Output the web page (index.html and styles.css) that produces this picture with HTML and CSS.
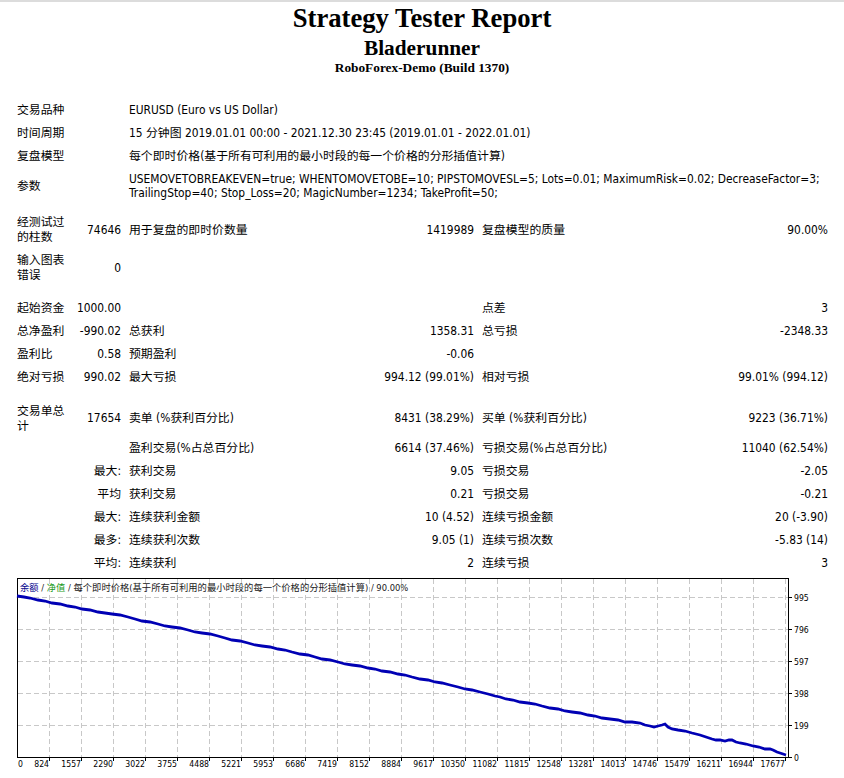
FILE: index.html
```html
<!DOCTYPE html>
<html lang="zh">
<head>
<meta charset="utf-8">
<title>Strategy Tester: Bladerunner</title>
<link rel="stylesheet" href="styles.css">
</head>
<body>
<div class="topline"></div>
<header class="head">
  <div class="t1">Strategy Tester Report</div>
  <div class="t2">Bladerunner</div>
  <div class="t3">RoboForex-Demo (Build 1370)</div>
</header>

<section class="report">
  <div class="row h23"><div class="s2">交易品种</div><div class="s4">EURUSD (Euro vs US Dollar)</div></div>
  <div class="row h23"><div class="s2">时间周期</div><div class="s4">15 分钟图 2019.01.01 00:00 - 2021.12.30 23:45 (2019.01.01 - 2022.01.01)</div></div>
  <div class="row h23"><div class="s2">复盘模型</div><div class="s4">每个即时价格(基于所有可利用的最小时段的每一个价格的分形插值计算)</div></div>
  <div class="row h36"><div class="s2">参数</div><div class="s4 params">USEMOVETOBREAKEVEN=true; WHENTOMOVETOBE=10; PIPSTOMOVESL=5; Lots=0.01; MaximumRisk=0.02; DecreaseFactor=3;<br>TrailingStop=40; Stop_Loss=20; MagicNumber=1234; TakeProfit=50;</div></div>
  <div class="sp7"></div>
  <div class="row h38"><div class="lbl">经测试过的柱数</div><div class="r">74646</div><div>用于复盘的即时价数量</div><div class="r">1419989</div><div>复盘模型的质量</div><div class="r">90.00%</div></div>
  <div class="row h38"><div class="lbl">输入图表错误</div><div class="r">0</div><div></div><div></div><div></div><div></div></div>
  <div class="sp10"></div>
  <div class="row h23"><div class="lbl">起始资金</div><div class="r">1000.00</div><div></div><div></div><div>点差</div><div class="r">3</div></div>
  <div class="row h23"><div class="lbl">总净盈利</div><div class="r">-990.02</div><div>总获利</div><div class="r">1358.31</div><div>总亏损</div><div class="r">-2348.33</div></div>
  <div class="row h23"><div class="lbl">盈利比</div><div class="r">0.58</div><div>预期盈利</div><div class="r">-0.06</div><div></div><div></div></div>
  <div class="row h23"><div class="lbl">绝对亏损</div><div class="r">990.02</div><div>最大亏损</div><div class="r">994.12 (99.01%)</div><div>相对亏损</div><div class="r">99.01% (994.12)</div></div>
  <div class="sp11"></div>
  <div class="row h37"><div class="lbl">交易单总计</div><div class="r">17654</div><div>卖单 (%获利百分比)</div><div class="r">8431 (38.29%)</div><div>买单 (%获利百分比)</div><div class="r">9223 (36.71%)</div></div>
  <div class="row h23"><div class="s2 r"></div><div>盈利交易(%占总百分比)</div><div class="r">6614 (37.46%)</div><div>亏损交易(%占总百分比)</div><div class="r">11040 (62.54%)</div></div>
  <div class="row h23"><div class="s2 r">最大:</div><div>获利交易</div><div class="r">9.05</div><div>亏损交易</div><div class="r">-2.05</div></div>
  <div class="row h23"><div class="s2 r">平均</div><div>获利交易</div><div class="r">0.21</div><div>亏损交易</div><div class="r">-0.21</div></div>
  <div class="row h23"><div class="s2 r">最大:</div><div>连续获利金额</div><div class="r">10 (4.52)</div><div>连续亏损金额</div><div class="r">20 (-3.90)</div></div>
  <div class="row h23"><div class="s2 r">最多:</div><div>连续获利次数</div><div class="r">9.05 (1)</div><div>连续亏损次数</div><div class="r">-5.83 (14)</div></div>
  <div class="row h23"><div class="s2 r">平均:</div><div>连续获利</div><div class="r">2</div><div>连续亏损</div><div class="r">3</div></div>
</section>

<div class="chart">
<svg class="graph" width="800" height="196" viewBox="16 576 800 196" xmlns="http://www.w3.org/2000/svg">
  <g class="grid">
    <line x1="18" y1="597.5" x2="788" y2="597.5"/>
    <line x1="18" y1="629.5" x2="788" y2="629.5"/>
    <line x1="18" y1="661.5" x2="788" y2="661.5"/>
    <line x1="18" y1="693.5" x2="788" y2="693.5"/>
    <line x1="18" y1="725.5" x2="788" y2="725.5"/>
    <line x1="49.5" y1="579" x2="49.5" y2="757"/>
    <line x1="81.5" y1="579" x2="81.5" y2="757"/>
    <line x1="113.5" y1="579" x2="113.5" y2="757"/>
    <line x1="145.5" y1="579" x2="145.5" y2="757"/>
    <line x1="177.5" y1="579" x2="177.5" y2="757"/>
    <line x1="209.5" y1="579" x2="209.5" y2="757"/>
    <line x1="241.5" y1="579" x2="241.5" y2="757"/>
    <line x1="273.5" y1="579" x2="273.5" y2="757"/>
    <line x1="305.5" y1="579" x2="305.5" y2="757"/>
    <line x1="337.5" y1="579" x2="337.5" y2="757"/>
    <line x1="369.5" y1="579" x2="369.5" y2="757"/>
    <line x1="401.5" y1="579" x2="401.5" y2="757"/>
    <line x1="433.5" y1="579" x2="433.5" y2="757"/>
    <line x1="465.5" y1="579" x2="465.5" y2="757"/>
    <line x1="497.5" y1="579" x2="497.5" y2="757"/>
    <line x1="529.5" y1="579" x2="529.5" y2="757"/>
    <line x1="561.5" y1="579" x2="561.5" y2="757"/>
    <line x1="593.5" y1="579" x2="593.5" y2="757"/>
    <line x1="625.5" y1="579" x2="625.5" y2="757"/>
    <line x1="657.5" y1="579" x2="657.5" y2="757"/>
    <line x1="689.5" y1="579" x2="689.5" y2="757"/>
    <line x1="721.5" y1="579" x2="721.5" y2="757"/>
    <line x1="753.5" y1="579" x2="753.5" y2="757"/>
    <line x1="785.5" y1="579" x2="785.5" y2="757"/>
  </g>
  <g class="ticks">
    <line x1="789" y1="597.5" x2="792" y2="597.5"/>
    <line x1="789" y1="629.5" x2="792" y2="629.5"/>
    <line x1="789" y1="661.5" x2="792" y2="661.5"/>
    <line x1="789" y1="693.5" x2="792" y2="693.5"/>
    <line x1="789" y1="725.5" x2="792" y2="725.5"/>
    <line x1="789" y1="757.5" x2="792" y2="757.5"/>
    <line x1="49.5" y1="758" x2="49.5" y2="761"/>
    <line x1="81.5" y1="758" x2="81.5" y2="761"/>
    <line x1="113.5" y1="758" x2="113.5" y2="761"/>
    <line x1="145.5" y1="758" x2="145.5" y2="761"/>
    <line x1="177.5" y1="758" x2="177.5" y2="761"/>
    <line x1="209.5" y1="758" x2="209.5" y2="761"/>
    <line x1="241.5" y1="758" x2="241.5" y2="761"/>
    <line x1="273.5" y1="758" x2="273.5" y2="761"/>
    <line x1="305.5" y1="758" x2="305.5" y2="761"/>
    <line x1="337.5" y1="758" x2="337.5" y2="761"/>
    <line x1="369.5" y1="758" x2="369.5" y2="761"/>
    <line x1="401.5" y1="758" x2="401.5" y2="761"/>
    <line x1="433.5" y1="758" x2="433.5" y2="761"/>
    <line x1="465.5" y1="758" x2="465.5" y2="761"/>
    <line x1="497.5" y1="758" x2="497.5" y2="761"/>
    <line x1="529.5" y1="758" x2="529.5" y2="761"/>
    <line x1="561.5" y1="758" x2="561.5" y2="761"/>
    <line x1="593.5" y1="758" x2="593.5" y2="761"/>
    <line x1="625.5" y1="758" x2="625.5" y2="761"/>
    <line x1="657.5" y1="758" x2="657.5" y2="761"/>
    <line x1="689.5" y1="758" x2="689.5" y2="761"/>
    <line x1="721.5" y1="758" x2="721.5" y2="761"/>
    <line x1="753.5" y1="758" x2="753.5" y2="761"/>
    <line x1="785.5" y1="758" x2="785.5" y2="761"/>
  </g>
  <rect class="frame" x="17.5" y="578.5" width="771" height="179"/>
  <polyline class="balance" points="17,596 24,597 30,598 38,600 45,601 52,603 60,604 68,606 75,607 82,609 90,610 98,612 105,613 112,614 120,615 128,617 135,619 142,621 150,622 158,624 165,626 172,627 180,628 188,630 195,632 202,633 210,634 218,636 225,638 232,640 240,641 248,643 255,645 262,646 270,647 278,649 285,650 292,652 300,654 308,655 315,657 322,659 330,660 338,662 345,664 352,665 360,666 368,668 375,669 382,671 390,672 398,674 405,675 412,677 420,679 428,680 435,682 442,683 450,685 458,687 465,689 472,690 480,692 488,694 495,696 500,697 506,699 513,700 520,702 528,703 535,704 542,706 550,708 558,709 565,711 572,712 580,713 588,715 595,716 602,718 610,719 618,720 625,722 632,722 640,723 645,725 650,726 654,727 658,726 662,725 665,724 668,727 672,729 678,730 685,731 692,733 700,735 706,737 712,739 716,740 720,740 725,741 729,740 732,740 736,742 740,743 746,744 753,746 759,747 765,749 770,749 773,750 777,752 780,753 783,754 786,755"/>
  <text class="ctitle" x="20" y="590.5"><tspan class="c-bal">余额</tspan> / <tspan class="c-eq">净值</tspan> / 每个即时价格(基于所有可利用的最小时段的每一个价格的分形插值计算) / 90.00%</text>
  <g class="ylab">
    <text x="794" y="600.5">995</text>
    <text x="794" y="632.5">796</text>
    <text x="794" y="664.5">597</text>
    <text x="794" y="696.5">398</text>
    <text x="794" y="728.5">199</text>
    <text x="794" y="760.5">0</text>
  </g>
  <g class="xlab">
    <text x="18" y="767" class="start">0</text>
    <text x="49" y="767">824</text>
    <text x="81" y="767">1557</text>
    <text x="113" y="767">2290</text>
    <text x="145" y="767">3022</text>
    <text x="177" y="767">3755</text>
    <text x="209" y="767">4488</text>
    <text x="241" y="767">5221</text>
    <text x="273" y="767">5953</text>
    <text x="305" y="767">6686</text>
    <text x="337" y="767">7419</text>
    <text x="369" y="767">8152</text>
    <text x="401" y="767">8884</text>
    <text x="433" y="767">9617</text>
    <text x="465" y="767">10350</text>
    <text x="497" y="767">11082</text>
    <text x="529" y="767">11815</text>
    <text x="561" y="767">12548</text>
    <text x="593" y="767">13281</text>
    <text x="625" y="767">14013</text>
    <text x="657" y="767">14746</text>
    <text x="689" y="767">15479</text>
    <text x="721" y="767">16211</text>
    <text x="753" y="767">16944</text>
    <text x="785" y="767">17677</text>
  </g>
</svg>
</div>
</body>
</html>
```

FILE: styles.css
```css
html, body {
  margin: 0;
  padding: 0;
  background: #ffffff;
}

body {
  color: #000000;
  font-family: "DejaVu Sans Condensed", "DejaVu Sans", "Noto Sans CJK SC", sans-serif;
  font-stretch: condensed;
  font-size: 11.86px;
  line-height: 15px;
  width: 844px;
}

.topline {
  height: 2px;
  background: #dcdcdc;
}

.head {
  padding-top: 1px;
  text-align: center;
  font-family: "Liberation Serif", "Noto Sans CJK SC", serif;
  font-stretch: normal;
  font-weight: bold;
}

.t1 {
  font-size: 26.67px;
  line-height: 30px;
}

.t2 {
  margin-top: 3px;
  font-size: 21.33px;
  line-height: 24px;
}

.t3 {
  font-size: 13.33px;
  line-height: 16px;
}

.report {
  margin-top: 23px;
  padding-left: 17px;
}

.row {
  display: grid;
  grid-template-columns: 49px 47px 231px 106px 220px 118px;
  column-gap: 8px;
  align-items: center;
}

.h23 { height: 23px; }
.h36 { height: 36px; }
.h37 { height: 37px; }
.h38 { height: 38px; }

.sp7 { height: 7px; }
.sp10 { height: 10px; }
.sp11 { height: 11px; }

.s2 { grid-column: span 2; }
.s4 { grid-column: span 4; white-space: nowrap; }

.r { text-align: right; white-space: nowrap; }

.params { line-height: 14px; }

.chart {
  margin-top: 1px;
}

.graph {
  display: block;
  margin-left: 16px;
  font-family: "DejaVu Sans Condensed", "DejaVu Sans", "Noto Sans CJK SC", sans-serif;
}

.grid line {
  stroke: #c8c8c8;
  stroke-width: 1;
  stroke-dasharray: 5 3;
}

.ticks line {
  stroke: #000000;
  stroke-width: 1;
}

.frame {
  fill: none;
  stroke: #000000;
  stroke-width: 1;
}

.balance {
  fill: none;
  stroke: #0000b4;
  stroke-width: 2.8;
  stroke-linejoin: miter;
}

.ctitle {
  font-size: 9.3px;
  fill: #202020;
}

.c-bal { fill: #00008c; }
.c-eq { fill: #1a9a1a; }

.ylab text {
  font-size: 8.6px;
  fill: #000000;
}

.xlab text {
  font-size: 8.6px;
  fill: #000000;
  text-anchor: end;
}

.xlab text.start {
  text-anchor: start;
}
```
